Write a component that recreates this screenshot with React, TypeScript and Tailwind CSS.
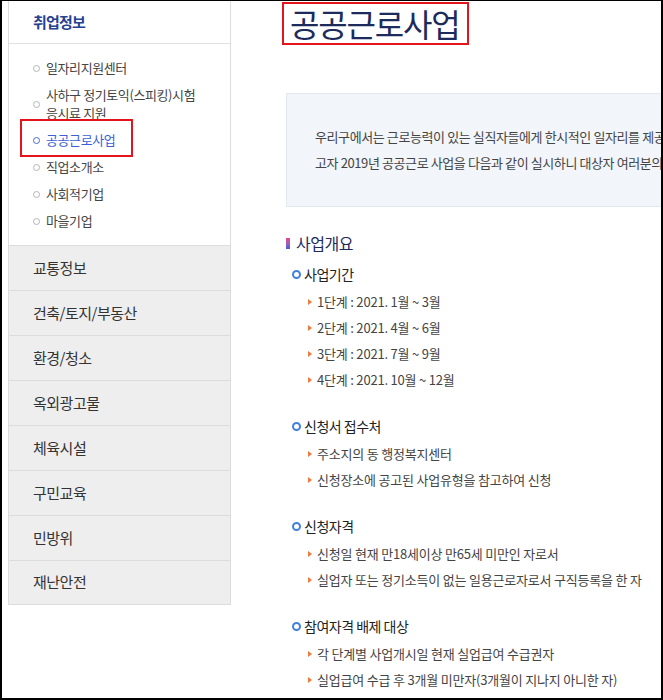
import React from 'react';

const subMenu = [
    { id: '1', lines: ['일자리지원센터'] },
    { id: '2', lines: ['사하구 정기토익(스피킹)시험', '응시료 지원'] },
    { id: '3', lines: ['공공근로사업'], active: true },
    { id: '4', lines: ['직업소개소'] },
    { id: '5', lines: ['사회적기업'] },
    { id: '6', lines: ['마을기업'] }
];

const mainMenu = ['교통정보', '건축/토지/부동산', '환경/청소', '옥외광고물', '체육시설', '구민교육', '민방위', '재난안전'];

const sections = [
    {
        title: '사업기간',
        items: ['1단계 : 2021. 1월 ~ 3월', '2단계 : 2021. 4월 ~ 6월', '3단계 : 2021. 7월 ~ 9월', '4단계 : 2021. 10월 ~ 12월']
    },
    {
        title: '신청서 접수처',
        items: ['주소지의 동 행정복지센터', '신청장소에 공고된 사업유형을 참고하여 신청']
    },
    {
        title: '신청자격',
        items: ['신청일 현재 만18세이상 만65세 미만인 자로서', '실업자 또는 정기소득이 없는 일용근로자로서 구직등록을 한 자']
    },
    {
        title: '참여자격 배제 대상',
        items: ['각 단계별 사업개시일 현재 실업급여 수급권자', '실업급여 수급 후 3개월 미만자(3개월이 지나지 아니한 자)']
    }
];

function App() {
    return (
        <div className="w-[663px] h-[700px] bg-white border-black border-l-2 border-r-2 border-t border-b-2 flex overflow-hidden font-['Noto_Sans_CJK_KR',sans-serif]">
            {/* sidebar */}
            <div className="ml-[6px] w-[223px] shrink-0 self-start border-x border-[#dcdcdc]">
                <div className="h-[43px] flex items-center pl-[24px] border-b border-[#e2e2e2]">
                    <h2 className="text-[15px] font-bold text-[#26418f] tracking-[-0.8px]">취업정보</h2>
                </div>
                <ul className="flex flex-col gap-[9px] pt-[15px] pb-[15px] pl-[24px]">
                    {subMenu.map(item => (
                        <li key={item.id} className="relative flex items-center">
                            <span
                                className={
                                    item.active
                                        ? 'w-[7px] h-[7px] rounded-full border-[1.5px] border-[#4a68d8] shrink-0'
                                        : 'w-[7px] h-[7px] rounded-full border-[1.5px] border-[#b5b5b5] shrink-0'
                                }
                            />
                            <div
                                className={
                                    item.active
                                        ? 'ml-[6px] text-[13px] leading-[18px] tracking-[-0.4px] text-[#3d5fd6]'
                                        : 'ml-[6px] text-[13px] leading-[18px] tracking-[-0.4px] text-[#444]'
                                }
                            >
                                {item.lines.map(line => (
                                    <div key={line} className="whitespace-nowrap">{line}</div>
                                ))}
                            </div>
                            {item.active && (
                                <span className="absolute left-[-13px] top-[-12px] w-[113px] h-[38px] border-2 border-[#e3141b]" />
                            )}
                        </li>
                    ))}
                </ul>
                {mainMenu.map(name => (
                    <div key={name} className="h-[45px] flex items-center pl-[24px] bg-[#eeeeee] border-t border-[#dcdcdc] last:border-b">
                        <span className="text-[15px] text-[#333] tracking-[-0.5px]">{name}</span>
                    </div>
                ))}
            </div>

            {/* content */}
            <div className="flex-1 min-w-0 overflow-hidden pl-[48px] pt-[1px]">
                <h1 className="inline-block ml-[3px] border-2 border-[#e3141b] pl-[6px] pr-[8px] h-[43px] leading-[38px] text-[32px] text-[#1d2a5c] tracking-[-1.2px]">
                    공공근로사업
                </h1>

                <div className="mt-[48px] ml-[7px] w-[600px] bg-[#f2f5fa] border border-[#e3e7ee] pl-[28px] pt-[30px] pb-[30px]">
                    <p className="text-[13px] leading-[26px] text-[#444] tracking-[-0.4px] whitespace-nowrap">
                        우리구에서는 근로능력이 있는 실직자들에게 한시적인 일자리를 제공하
                    </p>
                    <p className="text-[13px] leading-[26px] text-[#444] tracking-[-0.4px] whitespace-nowrap">
                        고자 2019년 공공근로 사업을 다음과 같이 실시하니 대상자 여러분의 많은 참여 바랍니다.
                    </p>
                </div>

                <div className="ml-[7px] mt-[25px] flex items-center">
                    <span className="w-[4px] h-[11px] bg-gradient-to-b from-[#ee3d8f] to-[#3d5fd6]" />
                    <h3 className="ml-[6px] text-[16px] leading-[22px] text-[#1d2a5c] tracking-[-0.5px]">사업개요</h3>
                </div>

                <div className="ml-[13px] mt-[9px] flex flex-col gap-[22px]">
                    {sections.map(section => (
                        <div key={section.title}>
                            <div className="flex items-center h-[22px]">
                                <span className="w-[9px] h-[9px] rounded-full border-[2.5px] border-[#3f80e0]" />
                                <h4 className="ml-[3px] text-[14px] text-[#222] tracking-[-0.5px]">{section.title}</h4>
                            </div>
                            <ul className="mt-[4px] flex flex-col">
                                {section.items.map(text => (
                                    <li key={text} className="h-[26px] flex items-center pl-[16px]">
                                        <span className="w-0 h-0 border-y-[3.5px] border-y-transparent border-l-[4px] border-l-[#f07a3c]" />
                                        <span className="ml-[5px] text-[13px] text-[#444] tracking-[-0.2px] whitespace-nowrap">{text}</span>
                                    </li>
                                ))}
                            </ul>
                        </div>
                    ))}
                </div>
            </div>
        </div>
    );
}

export default App;
